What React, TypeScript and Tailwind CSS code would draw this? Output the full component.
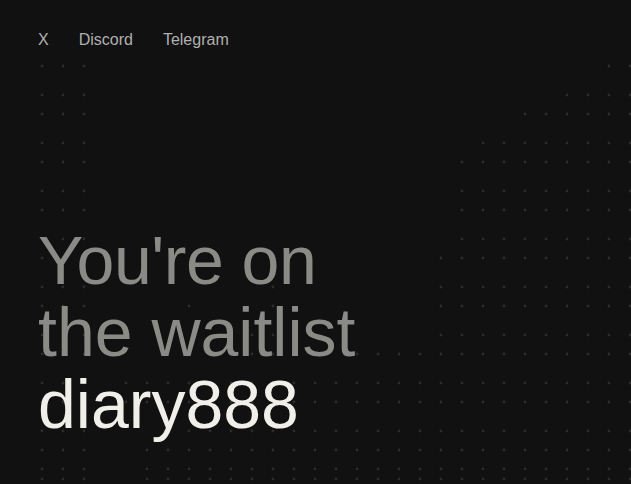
import React from 'react';

const ROWS = [66, 95, 114, 143, 162, 191, 210, 239, 258, 287, 306, 335, 354, 383, 402, 431, 450, 469, 479];

// leftmost visible column on the right-hand side, per row
const ROW_START: Record<number, number> = {
  66: 608, 95: 566, 114: 524, 143: 482, 162: 462, 191: 462, 210: 462, 239: 462,
  258: 441, 287: 441, 306: 441, 335: 441, 354: 357,
  383: 126, 402: 126, 431: 189, 450: 147, 469: 147, 479: 147,
};

const EXTRA = ['273,287', '189,306', '273,306', '252,335', '273,335', '294,335', '231,354', '252,354', '273,354'];

function DotField() {
  const dots: { x: number; y: number }[] = [];
  ROWS.forEach((y) => {
    for (let k = 2; k <= 30; k++) {
      const x = k * 21;
      const visible = x <= 84 || x >= ROW_START[y] || EXTRA.includes(`${x},${y}`);
      if (visible) dots.push({ x, y });
    }
  });

  return (
    <svg className="absolute inset-0 h-full w-full pointer-events-none" width="631" height="484" aria-hidden="true">
      {dots.map((d) => (
        <circle key={`${d.x}-${d.y}`} cx={d.x} cy={d.y} r="1.4" fill="#2c2c2c" />
      ))}
    </svg>
  );
}

export default function App() {
  return (
    <div className="relative min-h-screen w-full overflow-hidden bg-[#111111] font-['Liberation_Sans',Arial,sans-serif]">
      <DotField />

      <div className="relative flex flex-col pl-[38px] pt-[28px]">
        {/* Nav */}
        <nav className="flex items-center gap-[30px] text-base leading-6 text-[#b0b0b0]">
          <a href="#">X</a>
          <a href="#">Discord</a>
          <a href="#">Telegram</a>
        </nav>

        {/* Heading */}
        <h1 className="mt-[172px] text-[68px] leading-[72px] font-normal">
          <span className="block tracking-[-0.5px] text-[#8a8a86]">You're on</span>
          <span className="block text-[#8a8a86]">the waitlist</span>
          <span className="block text-[#f1efe9]">diary888</span>
        </h1>
      </div>
    </div>
  );
}
